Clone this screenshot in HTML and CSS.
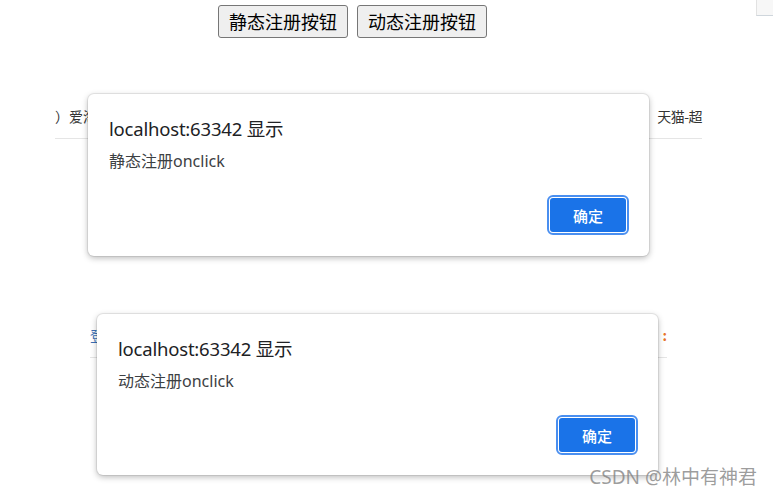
FILE: index.html
```html
<!DOCTYPE html>
<html lang="zh-CN">
<head>
<meta charset="utf-8">
<title>onclick</title>
<link rel="stylesheet" href="styles.css">
</head>
<body>
  <div class="corner"></div>
  <div class="toolbar">
    <button class="page-btn">静态注册按钮</button>
    <button class="page-btn">动态注册按钮</button>
  </div>

  <section class="panel panel-one">
    <div class="strip">
      <span class="strip-left">）爱淘宝</span>
      <span class="strip-right">天猫-超</span>
    </div>
    <div class="dialog">
      <div class="dialog-title">localhost:63342 显示</div>
      <div class="dialog-msg">静态注册onclick</div>
      <div class="dialog-actions"><button class="ok-btn">确定</button></div>
    </div>
  </section>

  <section class="panel panel-two">
    <div class="strip strip-two">
      <span class="strip-left blue">登录</span>
      <span class="strip-colon">:</span>
    </div>
    <div class="dialog">
      <div class="dialog-title">localhost:63342 显示</div>
      <div class="dialog-msg">动态注册onclick</div>
      <div class="dialog-actions"><button class="ok-btn">确定</button></div>
    </div>
  </section>

  <div class="watermark">CSDN @林中有神君</div>
</body>
</html>
```

FILE: styles.css
```css
html, body {
  margin: 0;
  padding: 0;
  background: #ffffff;
}
body {
  position: relative;
  width: 773px;
  height: 496px;
  overflow: hidden;
  font-family: "Noto Sans", "Noto Sans CJK SC", sans-serif;
  color: #202124;
}
.corner {
  position: absolute;
  top: 0;
  right: 0;
  width: 16px;
  height: 15px;
  background: #f7f7f7;
  border-left: 1px solid #e2e2e2;
  border-bottom: 1px solid #cfd6dc;
}
.toolbar {
  display: flex;
  gap: 9px;
  padding: 5px 0 0 218px;
}
.page-btn {
  width: 130px;
  height: 33px;
  padding: 0;
  font-family: "Noto Sans CJK SC", sans-serif;
  font-size: 18px;
  line-height: 31px;
  color: #000;
  background: #efefef;
  border: 1px solid #767676;
  border-radius: 3px;
}
.panel {
  position: relative;
  height: 162px;
}
.panel-one {
  margin: 56px 0 0 55px;
  width: 647px;
}
.panel-two {
  margin: 58px 0 0 90px;
  width: 577px;
}
.strip {
  display: flex;
  justify-content: space-between;
  padding: 12px 0;
  height: 20px;
  line-height: 20px;
  font-family: "Noto Sans CJK SC", sans-serif;
  font-size: 14px;
  color: #333;
  border-bottom: 1px solid #e5e5e5;
}
.strip-two {
  padding: 11px 0 12px;
  height: 20px;
}
.strip-left {
  white-space: nowrap;
}
.strip-left.blue {
  color: #3a6fb5;
}
.strip-right {
  white-space: nowrap;
  letter-spacing: -0.5px;
}
.strip-colon {
  color: #e8742b;
  font-weight: bold;
  padding-right: 0;
}
.dialog {
  position: absolute;
  top: 0;
  box-sizing: border-box;
  width: 561px;
  height: 162px;
  padding: 23px 23px 24px 21px;
  background: #fff;
  border-radius: 6px;
  box-shadow: 0 0 0 1px rgba(0, 0, 0, 0.07), 0 2px 6px rgba(0, 0, 0, 0.28);
}
.panel-one .dialog { left: 33px; }
.panel-two .dialog { left: 7px; height: 161px; }
.dialog-title {
  font-size: 18.5px;
  line-height: 24px;
  color: #202124;
  white-space: nowrap;
  letter-spacing: -0.2px;
}
.dialog-msg {
  margin-top: 10px;
  font-size: 16px;
  line-height: 20px;
  color: #3c4043;
}
.dialog-actions {
  display: flex;
  justify-content: flex-end;
  margin-top: 27px;
}
.ok-btn {
  width: 76px;
  height: 34px;
  padding: 0;
  font-family: "Noto Sans CJK SC", sans-serif;
  font-size: 15px;
  font-weight: 500;
  color: #fff;
  background: #1a73e8;
  border: none;
  border-radius: 3px;
  outline: 2px solid #4a8ff0;
  outline-offset: 1px;
}
.watermark {
  position: absolute;
  right: 16px;
  top: 465px;
  font-family: "Noto Sans", "Noto Sans CJK SC", sans-serif;
  font-size: 19px;
  line-height: 24px;
  color: rgba(125, 125, 125, 0.75);
  white-space: nowrap;
}
```
